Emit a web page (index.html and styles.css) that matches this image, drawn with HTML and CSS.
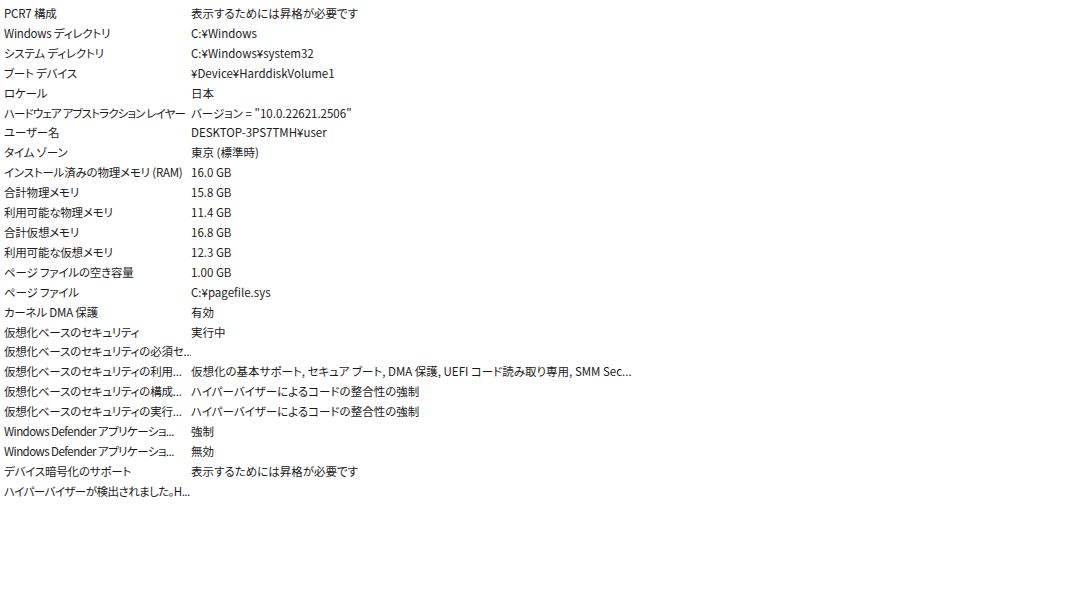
FILE: index.html
```html
<!DOCTYPE html>
<html lang="ja">
<head>
<meta charset="utf-8">
<link rel="stylesheet" href="styles.css">
</head>
<body>
<div class="list">
  <div class="row"><span class="k">PCR7 構成</span><span class="v">表示するためには昇格が必要です</span></div>
  <div class="row"><span class="k">Windows ディレクトリ</span><span class="v">C:¥Windows</span></div>
  <div class="row"><span class="k">システム ディレクトリ</span><span class="v">C:¥Windows¥system32</span></div>
  <div class="row"><span class="k">ブート デバイス</span><span class="v">¥Device¥HarddiskVolume1</span></div>
  <div class="row"><span class="k">ロケール</span><span class="v">日本</span></div>
  <div class="row"><span class="k tighter">ハードウェア アブストラクション レイヤー</span><span class="v">バージョン = "10.0.22621.2506"</span></div>
  <div class="row"><span class="k">ユーザー名</span><span class="v">DESKTOP-3PS7TMH¥user</span></div>
  <div class="row"><span class="k">タイム ゾーン</span><span class="v">東京 (標準時)</span></div>
  <div class="row"><span class="k">インストール済みの物理メモリ (RAM)</span><span class="v">16.0 GB</span></div>
  <div class="row"><span class="k">合計物理メモリ</span><span class="v">15.8 GB</span></div>
  <div class="row"><span class="k">利用可能な物理メモリ</span><span class="v">11.4 GB</span></div>
  <div class="row"><span class="k">合計仮想メモリ</span><span class="v">16.8 GB</span></div>
  <div class="row"><span class="k">利用可能な仮想メモリ</span><span class="v">12.3 GB</span></div>
  <div class="row"><span class="k">ページ ファイルの空き容量</span><span class="v">1.00 GB</span></div>
  <div class="row"><span class="k">ページ ファイル</span><span class="v">C:¥pagefile.sys</span></div>
  <div class="row"><span class="k">カーネル DMA 保護</span><span class="v">有効</span></div>
  <div class="row"><span class="k">仮想化ベースのセキュリティ</span><span class="v">実行中</span></div>
  <div class="row"><span class="k">仮想化ベースのセキュリティの必須セ...</span><span class="v"></span></div>
  <div class="row"><span class="k">仮想化ベースのセキュリティの利用...</span><span class="v">仮想化の基本サポート, セキュア ブート, DMA 保護, UEFI コード読み取り専用, SMM Sec...</span></div>
  <div class="row"><span class="k">仮想化ベースのセキュリティの構成...</span><span class="v">ハイパーバイザーによるコードの整合性の強制</span></div>
  <div class="row"><span class="k">仮想化ベースのセキュリティの実行...</span><span class="v">ハイパーバイザーによるコードの整合性の強制</span></div>
  <div class="row"><span class="k tight">Windows Defender アプリケーショ...</span><span class="v">強制</span></div>
  <div class="row"><span class="k tight">Windows Defender アプリケーショ...</span><span class="v">無効</span></div>
  <div class="row"><span class="k">デバイス暗号化のサポート</span><span class="v">表示するためには昇格が必要です</span></div>
  <div class="row"><span class="k tight">ハイパーバイザーが検出されました。H...</span><span class="v"></span></div>
</div>
</body>
</html>
```
FILE: styles.css
```css
html, body {
  margin: 0;
  padding: 0;
  background: #ffffff;
}
body {
  font-family: "Noto Sans CJK JP", "Noto Sans", sans-serif;
  font-size: 11.5px;
  color: #1b1b1b;
  font-feature-settings: "palt";
}
.list {
  padding-top: 4px;
  padding-left: 4px;
}
.row {
  display: flex;
  height: 19.92px;
  line-height: 19.92px;
  white-space: nowrap;
}
.k {
  width: 187px;
  flex: none;
  letter-spacing: -0.2px;
  overflow: hidden;
}
.k.tight {
  letter-spacing: -0.55px;
}
.k.tighter {
  letter-spacing: -0.85px;
}
.v {
  flex: none;
}
```
